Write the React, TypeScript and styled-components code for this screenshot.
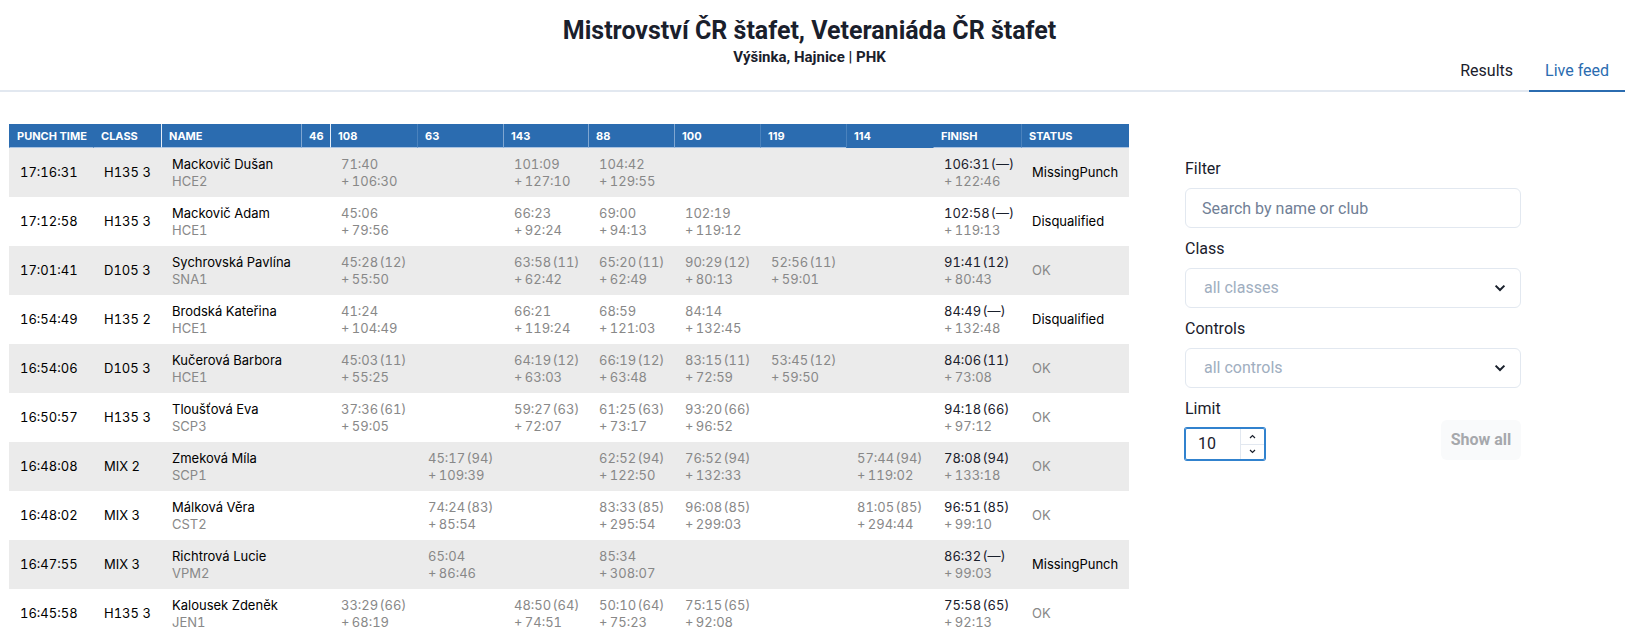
import React, { useState } from "react";
import styled, { createGlobalStyle } from "styled-components";

const GlobalStyle = createGlobalStyle`
  *, *::before, *::after { box-sizing: border-box; }
  body {
    margin: 0;
    background: #fff;
    color: #1a202c;
    font-family: Roboto, "Liberation Sans", sans-serif;
    font-size: 16px;
    line-height: 24px;
  }
  button, input, select { font: inherit; color: inherit; margin: 0; }
`;

const Header = styled.header`
  margin-right: 6px;
  padding-top: 16px;
`;

const Heading = styled.div`
  padding-right: 6px;
  text-align: center;
`;

const Title = styled.h1`
  margin: 0;
  font-size: 25px;
  line-height: 30px;
  font-weight: 700;
`;

const Subtitle = styled.p`
  margin: 0;
  font-size: 15px;
  line-height: 22px;
  font-weight: 700;
`;

const Tabs = styled.nav`
  display: flex;
  justify-content: flex-end;
  height: 40px;
  margin-top: -16px;
  border-bottom: 2px solid #e2e8f0;
`;

const Tab = styled.a<{ $active?: boolean }>`
  height: 40px;
  padding: 7px 16px;
  border-bottom: 2px solid ${(p) => (p.$active ? "#2b6cb0" : "transparent")};
  color: ${(p) => (p.$active ? "#2b6cb0" : "inherit")};
  text-decoration: none;
`;

const Main = styled.main`
  display: grid;
  grid-template-columns: minmax(0, 1fr) 336px;
  column-gap: 56px;
  align-items: start;
  padding: 32px 110px 0 9px;
`;

const Table = styled.table`
  width: 100%;
  table-layout: fixed;
  border-collapse: separate;
  border-spacing: 0;
  font-family: Inter, "Liberation Sans", sans-serif;
  font-size: 13px;
  line-height: 17px;
  font-variant-numeric: tabular-nums;
`;

const Col = styled.col<{ $w: number }>`
  width: ${(p) => p.$w}px;
`;

type Edge = "none" | "faint" | "soft" | "strong";

const edgeColors: Record<Edge, string> = {
  none: "#2b6cb0",
  faint: "#4a82bd",
  soft: "#7fa6d1",
  strong: "#e6eef7",
};

const HeadCell = styled.th<{ $edge: Edge; $sorted?: boolean }>`
  height: 24px;
  padding: 2px 0 0 7px;
  background: #2b6cb0;
  border-left: 1px solid ${(p) => edgeColors[p.$edge]};
  border-bottom: 1px solid ${(p) => (p.$sorted ? "#2b6cb0" : "#a9c3e2")};
  color: #fff;
  font-size: 11px;
  font-weight: 700;
  font-variant-numeric: normal;
  text-align: left;
  white-space: nowrap;
`;

const Row = styled.tr`
  &:nth-child(odd) { background: #ebebeb; }
`;

const Cell = styled.td<{ $muted?: boolean }>`
  height: 49px;
  padding: 0 0 0 11px;
  color: ${(p) => (p.$muted ? "#888" : "#000")};
  white-space: nowrap;
`;

const Line = styled.div<{ $tone: "black" | "dark" | "muted" }>`
  color: ${(p) => ({ black: "#000", dark: "#1a202c", muted: "#888" })[p.$tone]};
`;

const Filters = styled.form`
  display: flex;
  flex-direction: column;
  gap: 8px;
  padding-top: 32px;
`;

const Label = styled.label`
  display: block;
  height: 24px;
  padding-top: 1px;
`;

const TextInput = styled.input`
  width: 100%;
  height: 40px;
  padding: 0 16px;
  border: 1px solid #e2e8f0;
  border-radius: 6px;
  background: #fff;
  &::placeholder { color: #718096; opacity: 1; }
`;

const SelectBox = styled.div`
  display: grid;
  align-items: center;
`;

const Select = styled.select`
  grid-area: 1 / 1;
  width: 100%;
  height: 40px;
  padding: 0 40px 0 18px;
  border: 1px solid #e2e8f0;
  border-radius: 6px;
  background: #fff;
  color: #a0aec0;
  appearance: none;
`;

const SelectArrow = styled.svg`
  grid-area: 1 / 1;
  justify-self: end;
  width: 12px;
  height: 8px;
  margin-right: 15px;
  pointer-events: none;
`;

const LimitRow = styled.div`
  display: flex;
  justify-content: space-between;
  align-items: flex-end;
`;

const LimitField = styled.div`
  display: grid;
  gap: 8px;
`;

const NumberBox = styled.div`
  display: flex;
  width: 80px;
  height: 32px;
  border: 1px solid #3182ce;
  border-radius: 2px;
  box-shadow: 0 0 0 1px #3182ce;
`;

const NumberInput = styled.input`
  flex: 1;
  min-width: 0;
  padding: 0 0 0 12px;
  border: 0;
  outline: 0;
  background: transparent;
  appearance: textfield;
  &::-webkit-inner-spin-button { appearance: none; margin: 0; }
`;

const Stepper = styled.div`
  display: flex;
  flex-direction: column;
  width: 24px;
  border-left: 1px solid #e2e8f0;
`;

const StepButton = styled.button`
  display: flex;
  flex: 1;
  align-items: center;
  justify-content: center;
  padding: 0;
  border: 0;
  background: transparent;
  & + & { border-top: 1px solid #e2e8f0; }
`;

const ShowAll = styled.button`
  width: 80px;
  height: 40px;
  padding: 0;
  border: 0;
  border-radius: 6px;
  background: #f9fafb;
  color: #a6a8ac;
  font-weight: 700;
`;

const columns: { title: string; width: number; edge: Edge; sorted?: boolean }[] = [
  { title: "PUNCH TIME", width: 84, edge: "none" },
  { title: "CLASS", width: 68, edge: "none" },
  { title: "NAME", width: 140, edge: "strong" },
  { title: "46", width: 29, edge: "soft" },
  { title: "108", width: 87, edge: "strong" },
  { title: "63", width: 86, edge: "faint" },
  { title: "143", width: 85, edge: "soft" },
  { title: "88", width: 86, edge: "soft" },
  { title: "100", width: 86, edge: "soft" },
  { title: "119", width: 86, edge: "faint" },
  { title: "114", width: 87, edge: "faint", sorted: true },
  { title: "FINISH", width: 88, edge: "none" },
  { title: "STATUS", width: 108, edge: "faint" },
];

// A split is "time [rank] loss"; an empty string is a control without a punch.
type Entry = {
  time: string;
  cls: string;
  name: string;
  club: string;
  splits: string[];
  finish: string;
  status: string;
};

const entries: Entry[] = [
  { time: "17:16:31", cls: "H135 3", name: "Mackovič Dušan", club: "HCE2", splits: ["", "71:40 106:30", "", "101:09 127:10", "104:42 129:55", "", "", ""], finish: "106:31 (—) 122:46", status: "MissingPunch" },
  { time: "17:12:58", cls: "H135 3", name: "Mackovič Adam", club: "HCE1", splits: ["", "45:06 79:56", "", "66:23 92:24", "69:00 94:13", "102:19 119:12", "", ""], finish: "102:58 (—) 119:13", status: "Disqualified" },
  { time: "17:01:41", cls: "D105 3", name: "Sychrovská Pavlína", club: "SNA1", splits: ["", "45:28 (12) 55:50", "", "63:58 (11) 62:42", "65:20 (11) 62:49", "90:29 (12) 80:13", "52:56 (11) 59:01", ""], finish: "91:41 (12) 80:43", status: "OK" },
  { time: "16:54:49", cls: "H135 2", name: "Brodská Kateřina", club: "HCE1", splits: ["", "41:24 104:49", "", "66:21 119:24", "68:59 121:03", "84:14 132:45", "", ""], finish: "84:49 (—) 132:48", status: "Disqualified" },
  { time: "16:54:06", cls: "D105 3", name: "Kučerová Barbora", club: "HCE1", splits: ["", "45:03 (11) 55:25", "", "64:19 (12) 63:03", "66:19 (12) 63:48", "83:15 (11) 72:59", "53:45 (12) 59:50", ""], finish: "84:06 (11) 73:08", status: "OK" },
  { time: "16:50:57", cls: "H135 3", name: "Tloušťová Eva", club: "SCP3", splits: ["", "37:36 (61) 59:05", "", "59:27 (63) 72:07", "61:25 (63) 73:17", "93:20 (66) 96:52", "", ""], finish: "94:18 (66) 97:12", status: "OK" },
  { time: "16:48:08", cls: "MIX 2", name: "Zmeková Míla", club: "SCP1", splits: ["", "", "45:17 (94) 109:39", "", "62:52 (94) 122:50", "76:52 (94) 132:33", "", "57:44 (94) 119:02"], finish: "78:08 (94) 133:18", status: "OK" },
  { time: "16:48:02", cls: "MIX 3", name: "Málková Věra", club: "CST2", splits: ["", "", "74:24 (83) 85:54", "", "83:33 (85) 295:54", "96:08 (85) 299:03", "", "81:05 (85) 294:44"], finish: "96:51 (85) 99:10", status: "OK" },
  { time: "16:47:55", cls: "MIX 3", name: "Richtrová Lucie", club: "VPM2", splits: ["", "", "65:04 86:46", "", "85:34 308:07", "", "", ""], finish: "86:32 (—) 99:03", status: "MissingPunch" },
  { time: "16:45:58", cls: "H135 3", name: "Kalousek Zdeněk", club: "JEN1", splits: ["", "33:29 (66) 68:19", "", "48:50 (64) 74:51", "50:10 (64) 75:23", "75:15 (65) 92:08", "", ""], finish: "75:58 (65) 92:13", status: "OK" },
];

function Split({ value, tone = "muted" }: { value: string; tone?: "dark" | "muted" }) {
  if (!value) return null;
  const parts = value.split(" ");
  const loss = parts[parts.length - 1];
  return (
    <>
      <Line $tone={tone}>{parts.slice(0, -1).join("\u200a")}</Line>
      <Line $tone="muted">{"+\u2009" + loss}</Line>
    </>
  );
}

function SelectField({ id, label, placeholder }: { id: string; label: string; placeholder: string }) {
  return (
    <>
      <Label htmlFor={id}>{label}</Label>
      <SelectBox>
        <Select id={id}>
          <option>{placeholder}</option>
        </Select>
        <SelectArrow viewBox="0 0 12 8" aria-hidden="true">
          <path d="M1.6 1.6 6 6l4.4-4.4" fill="none" stroke="#1a202c" strokeWidth="2" />
        </SelectArrow>
      </SelectBox>
    </>
  );
}

export default function App() {
  const [limit, setLimit] = useState(10);
  return (
    <>
      <GlobalStyle />
      <Header>
        <Heading>
          <Title>Mistrovství ČR štafet, Veteraniáda ČR štafet</Title>
          <Subtitle>Výšinka, Hajnice | PHK</Subtitle>
        </Heading>
        <Tabs>
          <Tab href="#results">Results</Tab>
          <Tab href="#live" $active aria-current="page">Live feed</Tab>
        </Tabs>
      </Header>
      <Main>
        <Table>
          <colgroup>
            {columns.map((c) => <Col key={c.title} $w={c.width} />)}
          </colgroup>
          <thead>
            <tr>
              {columns.map((c) => (
                <HeadCell key={c.title} scope="col" $edge={c.edge} $sorted={c.sorted}>{c.title}</HeadCell>
              ))}
            </tr>
          </thead>
          <tbody>
            {entries.map((e) => (
              <Row key={e.name}>
                <Cell>{e.time}</Cell>
                <Cell>{e.cls}</Cell>
                <Cell>
                  <Line $tone="black">{e.name}</Line>
                  <Line $tone="muted">{e.club}</Line>
                </Cell>
                {e.splits.map((s, i) => <Cell key={i}><Split value={s} /></Cell>)}
                <Cell><Split value={e.finish} tone="dark" /></Cell>
                <Cell $muted={e.status === "OK"}>{e.status}</Cell>
              </Row>
            ))}
          </tbody>
        </Table>
        <Filters>
          <Label htmlFor="filter">Filter</Label>
          <TextInput id="filter" type="text" placeholder="Search by name or club" />
          <SelectField id="class" label="Class" placeholder="all classes" />
          <SelectField id="controls" label="Controls" placeholder="all controls" />
          <LimitRow>
            <LimitField>
              <Label htmlFor="limit">Limit</Label>
              <NumberBox>
                <NumberInput id="limit" type="number" value={limit} onChange={(ev) => setLimit(Number(ev.target.value))} />
                <Stepper>
                  <StepButton type="button" aria-label="Increase limit" onClick={() => setLimit(limit + 1)}>
                    <svg width="7" height="5" viewBox="0 0 7 5" aria-hidden="true">
                      <path d="M1 4l2.5-2.5L6 4" fill="none" stroke="#1a202c" strokeWidth="1.2" />
                    </svg>
                  </StepButton>
                  <StepButton type="button" aria-label="Decrease limit" onClick={() => setLimit(limit - 1)}>
                    <svg width="7" height="5" viewBox="0 0 7 5" aria-hidden="true">
                      <path d="M1 1l2.5 2.5L6 1" fill="none" stroke="#1a202c" strokeWidth="1.2" />
                    </svg>
                  </StepButton>
                </Stepper>
              </NumberBox>
            </LimitField>
            <ShowAll type="button" disabled>Show all</ShowAll>
          </LimitRow>
        </Filters>
      </Main>
    </>
  );
}
